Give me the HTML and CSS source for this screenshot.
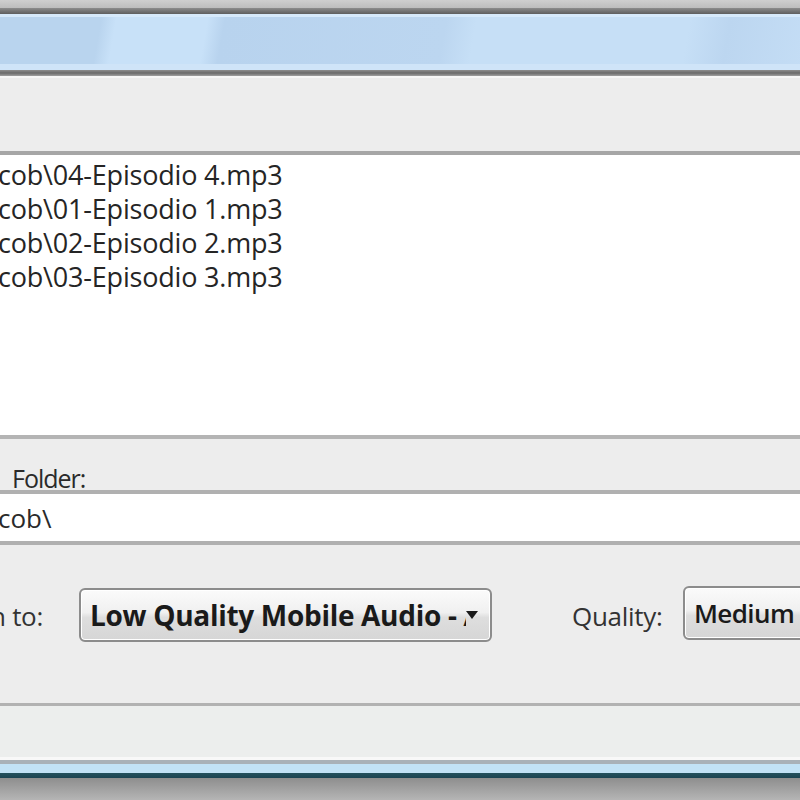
FILE: index.html
```html
<!DOCTYPE html>
<html>
<head>
<meta charset="utf-8">
<link rel="stylesheet" href="styles.css">
</head>
<body>
<div class="frame-top"></div>
<div class="frame-dark"></div>
<div class="titlebar"></div>
<div class="frame-dark2"></div>
<div class="panel top-panel"></div>
<div class="list">
  <div class="item">cob\04-Episodio 4.mp3</div>
  <div class="item">cob\01-Episodio 1.mp3</div>
  <div class="item">cob\02-Episodio 2.mp3</div>
  <div class="item">cob\03-Episodio 3.mp3</div>
</div>
<div class="panel folder-panel"><span class="label folder-label">Folder:</span></div>
<div class="field"><span class="field-text">cob\</span></div>
<div class="panel convert-panel">
  <div class="to-box"><span class="label">n to:</span></div>
  <div class="combo">
    <span class="combo-text">Low Quality Mobile Audio - AAC</span>
    <svg class="arrow" width="12" height="8" viewBox="0 0 12 8"><path d="M0 0 L12 0 L6 8 Z" fill="#1a1a1a"/></svg>
  </div>
  <span class="label quality-label">Quality:</span>
  <div class="combo medium"><span class="combo-text">Medium</span></div>
</div>
<div class="panel bottom-panel"></div>
<div class="frame-bottom"></div>
</body>
</html>
```
FILE: styles.css
```css
html, body {
  margin: 0;
  padding: 0;
  width: 800px;
  height: 800px;
  overflow: hidden;
  background: #a0a0a0;
  font-family: "Open Sans", "Noto Sans", sans-serif;
  color: #2e2e2e;
}
.frame-top {
  height: 8px;
  background: linear-gradient(#cfcfcf, #bdbdbd);
}
.frame-dark {
  height: 6px;
  background: linear-gradient(#8c8c8c, #5e5e5e);
}
.titlebar {
  height: 56px;
  box-sizing: border-box;
  border-top: 3px solid #d6e9fa;
  border-bottom: 6px solid #cfe4f8;
  background: linear-gradient(100deg,
    #b9d4ee 0px, #b9d4ee 100px,
    #c8e1f8 115px, #c8e1f8 205px,
    #b8d3ee 222px, #bcd6f0 440px,
    #c6dff6 470px, #c6dff6 680px,
    #bcd6f0 720px, #c4ddf5 800px);
}
.frame-dark2 {
  height: 6px;
  background: linear-gradient(#8e8e8e, #6a6a6a 50%, #a0a0a0);
}
.panel {
  background: #ededed;
}
.top-panel {
  height: 79px;
  box-sizing: border-box;
  border-top: 2px solid #f7f7f7;
  border-bottom: 4px solid #a6a6a6;
}
.list {
  height: 280px;
  background: #fff;
  padding-top: 3px;
  box-sizing: border-box;
}
.item {
  font-size: 27px;
  line-height: 34px;
  height: 34px;
  margin-left: -2px;
  letter-spacing: -0.2px;
  color: #252525;
}
.folder-panel {
  height: 59px;
  box-sizing: border-box;
  border-top: 4px solid #b4b4b4;
  border-bottom: 4px solid #b0b0b0;
  display: flex;
  align-items: center;
  padding-left: 12px;
  padding-top: 27px;
}
.label {
  font-size: 26px;
  color: #333;
  letter-spacing: -0.3px;
  white-space: nowrap;
}
.folder-label {
  font-size: 25px;
  font-weight: 500;
  letter-spacing: -1px;
  color: #2a2a2a;
}
.field {
  height: 51px;
  box-sizing: border-box;
  background: #fff;
  border-bottom: 4px solid #b0b0b0;
  display: flex;
  align-items: center;
  font-size: 26px;
  color: #2a2a2a;
}
.field-text {
  margin-left: -2px;
}
.convert-panel {
  height: 161px;
  box-sizing: border-box;
  border-bottom: 3px solid #b2b2b2;
  display: flex;
  align-items: flex-start;
  padding-top: 43px;
}
.to-box {
  width: 43px;
  margin-right: 36px;
  margin-top: 10px;
  display: flex;
  justify-content: flex-end;
  overflow: hidden;
  flex: none;
}
.combo {
  width: 413px;
  height: 54px;
  box-sizing: border-box;
  border: 2px solid #8c8c8c;
  border-radius: 6px;
  background: linear-gradient(#fbfbfb, #f0f0f0 45%, #dedede 55%, #d6d6d6);
  box-shadow: inset 0 0 0 1px #fff;
  display: flex;
  align-items: center;
  padding-left: 9px;
  padding-right: 12px;
  overflow: hidden;
  flex: none;
}
.combo-text {
  font-weight: 700;
  font-size: 28px;
  letter-spacing: -0.3px;
  color: #1a1a1a;
  white-space: nowrap;
  overflow: hidden;
  width: 376px;
  flex: none;
}
.arrow {
  margin-left: auto;
  flex: none;
}
.quality-label {
  margin-left: 80px;
  margin-top: 10px;
  width: 111px;
  flex: none;
}
.medium {
  width: 140px;
  margin-top: -2px;
}
.medium .combo-text {
  font-weight: 600;
  font-size: 26px;
  letter-spacing: -0.6px;
}
.bottom-panel {
  height: 54px;
  box-sizing: border-box;
  background: #eceeed;
  border-bottom: 3px solid #f8f8f8;
}
.frame-bottom {
  height: 40px;
  background: linear-gradient(#a9b1b8 0px, #a9b1b8 4px,
    #c2e2f6 4px, #c2e2f6 13px,
    #24515e 13px, #1c4452 18px,
    #8e8e8e 18px, #b5b5b5 40px);
}
```
